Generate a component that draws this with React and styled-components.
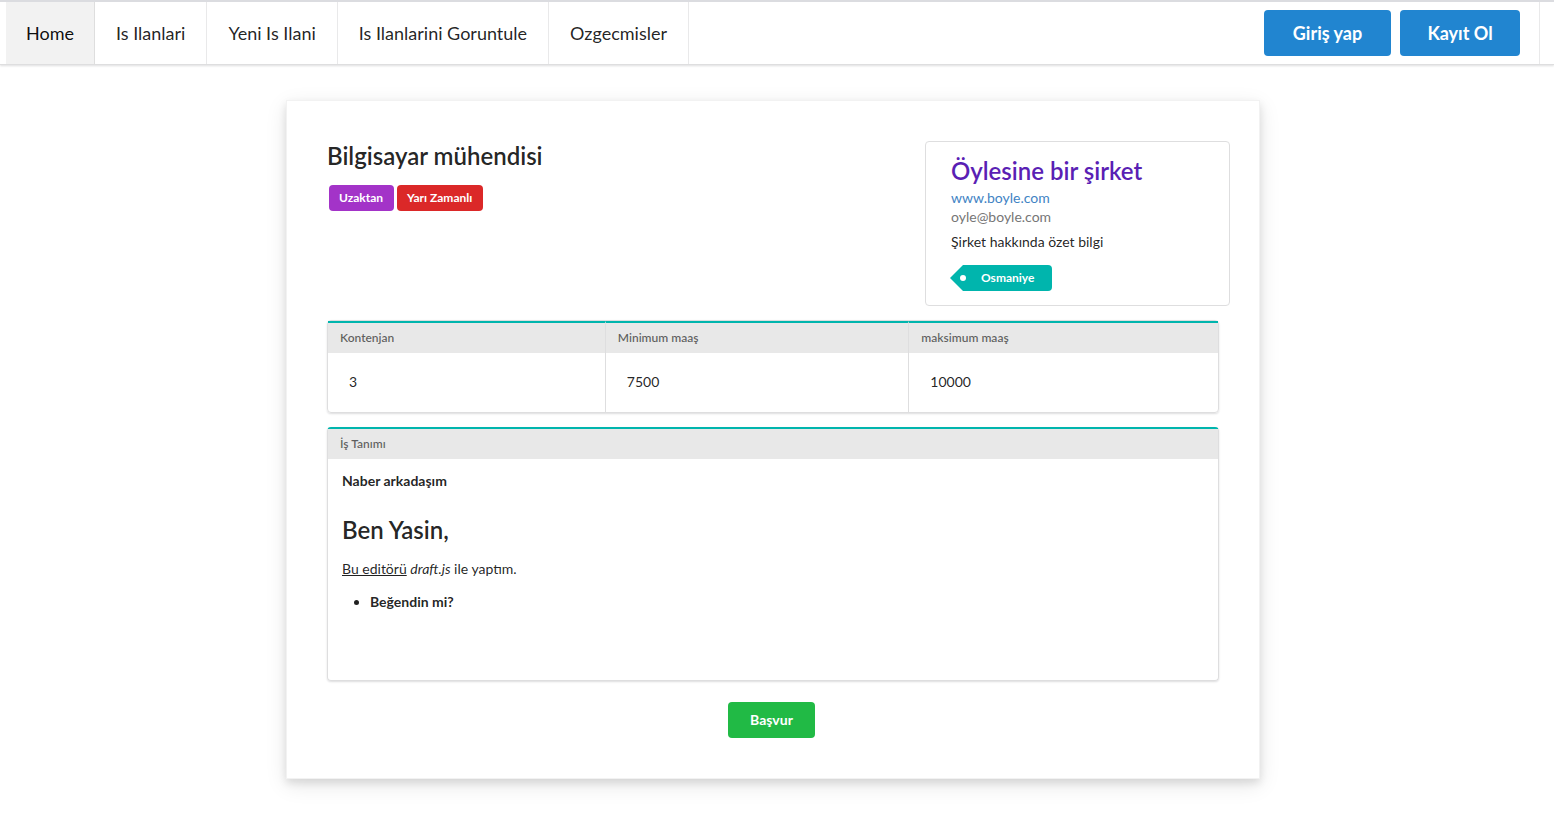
import React from "react";
import styled, { createGlobalStyle } from "styled-components";

const GlobalStyle = createGlobalStyle`
  *, *::before, *::after { box-sizing: border-box; }
  body {
    margin: 0;
    background: #fff;
    color: rgba(0, 0, 0, 0.87);
    font-family: Lato, "Liberation Sans", sans-serif;
    font-size: 14px;
    line-height: 20px;
  }
  h1, h2, h3, p, ul { margin: 0; padding: 0; font-weight: inherit; }
`;

const Menu = styled.nav`
  display: flex;
  height: 65px;
  padding: 0 14px 0 6px;
  border-top: 2px solid #dbdce0;
  border-bottom: 1px solid #dededf;
  box-shadow: 0 1px 2px rgba(34, 36, 38, 0.15);
`;

const MenuItem = styled.a`
  display: flex;
  align-items: center;
  padding: 0 ${(p) => (p.$active ? 20 : 21)}px;
  border-right: 1px solid ${(p) => (p.$active ? "#dedede" : "#e9e9ea")};
  background: ${(p) => (p.$active ? "#f2f2f2" : "transparent")};
  color: ${(p) => (p.$active ? "rgba(0,0,0,.95)" : "rgba(0,0,0,.87)")};
  font-size: 18px;
  white-space: nowrap;
  text-decoration: none;
`;

const MenuActions = styled.div`
  display: flex;
  align-items: center;
  gap: 9px;
  margin-left: auto;
  padding-right: 19px;
  border-right: 1px solid #e9e9ea;
`;

const Button = styled.button`
  min-width: ${(p) => p.$minWidth}px;
  height: ${(p) => (p.$large ? 46 : 36)}px;
  padding: 0 20px;
  border: 0;
  border-radius: 4px;
  background: ${(p) => p.$color};
  color: #fff;
  font-family: inherit;
  font-size: ${(p) => (p.$large ? 18 : 14)}px;
  font-weight: 700;
  line-height: 20px;
  white-space: nowrap;
  cursor: pointer;
`;

const Page = styled.main`
  padding: 35px 8px 43px 0;
`;

const Card = styled.article`
  max-width: 974px;
  margin: 0 auto;
  padding: 40px;
  border: 1px solid #f2f2f2;
  box-shadow: 0 4px 8px rgba(0, 0, 0, 0.1), 0 6px 20px rgba(0, 0, 0, 0.1);
`;

const CardHeader = styled.header`
  display: flex;
  justify-content: space-between;
  margin: 0 -11px 14px 0;
`;

const Title = styled.h1`
  font-size: 24px;
  font-weight: 600;
  line-height: 30px;
`;

const Badges = styled.div`
  display: flex;
  gap: 3px;
  margin: 14px 0 0 2px;
`;

const Badge = styled.span`
  height: 26px;
  padding: 0 11px 0 10px;
  border-radius: 4px;
  background: ${(p) => p.$color};
  color: #fff;
  font-size: 12px;
  font-weight: 700;
  line-height: 26px;
`;

const Company = styled.aside`
  width: 305px;
  height: 165px;
  padding: 14px 25px;
  border: 1px solid #dededf;
  border-radius: 4px;
`;

const CompanyName = styled.h2`
  margin-bottom: 2px;
  color: #5a1fb4;
  font-size: 24px;
  font-weight: 600;
  line-height: 30px;
`;

const CompanyLink = styled.a`
  display: block;
  color: ${(p) => (p.$muted ? "#767676" : "#4183c4")};
  line-height: 19px;
  text-decoration: none;
`;

const CompanyAbout = styled.p`
  margin: 6px 0 13px;
`;

const Tag = styled.span`
  position: relative;
  display: inline-block;
  height: 26px;
  margin-left: 12px;
  padding: 0 18px;
  border-radius: 0 4px 4px 0;
  background: #00b5ad;
  color: #fff;
  font-size: 12px;
  font-weight: 700;
  line-height: 26px;

  &::before {
    content: "";
    position: absolute;
    top: 0;
    left: -13px;
    width: 13px;
    height: 26px;
    background: #00b5ad;
    clip-path: polygon(100% 0, 100% 100%, 0 50%);
  }

  &::after {
    content: "";
    position: absolute;
    top: 10px;
    left: -3px;
    width: 6px;
    height: 6px;
    border-radius: 50%;
    background: #fff;
  }
`;

const Salary = styled.table`
  width: 100%;
  table-layout: fixed;
  border: 1px solid #dededf;
  border-radius: 4px;
  border-spacing: 0;
  box-shadow: 0 1px 2px rgba(34, 36, 38, 0.15);

  th, td { text-align: left; }
  th + th, td + td { border-left: 1px solid #dededf; }
`;

const HeadCell = styled.th`
  width: ${(p) => p.$width};
  height: 32px;
  padding: 0 12px;
  border-top: 2px solid #00b5ad;
  background: #e8e8e8;
  color: rgba(0, 0, 0, 0.6);
  font-size: 12px;
  font-weight: 600;
`;

const Cell = styled.td`
  height: 59px;
  padding: 0 21px 2px;
`;

const Description = styled.section`
  min-height: 254px;
  margin: 14px 0 21px;
  border: 1px solid #dededf;
  border-top: 2px solid #00b5ad;
  border-radius: 4px;
  box-shadow: 0 1px 2px rgba(34, 36, 38, 0.15);
`;

const DescriptionLabel = styled.h3`
  padding: 0 12px;
  background: #e8e8e8;
  color: rgba(0, 0, 0, 0.6);
  font-size: 12px;
  font-weight: 600;
  line-height: 30px;
`;

const DescriptionBody = styled.div`
  padding: 12px 14px;
`;

const Strong = styled.p`
  font-weight: 700;
`;

const Heading = styled.h2`
  margin: 24px 0 14px;
  font-size: 24px;
  font-weight: 600;
  line-height: 30px;
`;

const List = styled.ul`
  margin-top: 13px;
  padding-left: 28px;
  font-weight: 700;
`;

const Actions = styled.footer`
  display: flex;
  justify-content: center;
  padding-right: 3px;
`;

const LINKS = ["Home", "Is Ilanlari", "Yeni Is Ilani", "Is Ilanlarini Goruntule", "Ozgecmisler"];

export default function App() {
  return (
    <>
      <GlobalStyle />
      <Menu>
        {LINKS.map((label, i) => (
          <MenuItem key={label} href="#" $active={i === 0}>{label}</MenuItem>
        ))}
        <MenuActions>
          <Button type="button" $large $minWidth={127} $color="#2185d0">Giriş yap</Button>
          <Button type="button" $large $minWidth={120} $color="#2185d0">Kayıt Ol</Button>
        </MenuActions>
      </Menu>
      <Page>
        <Card>
          <CardHeader>
            <div>
              <Title>Bilgisayar mühendisi</Title>
              <Badges>
                <Badge $color="#a333c8">Uzaktan</Badge>
                <Badge $color="#db2828">Yarı Zamanlı</Badge>
              </Badges>
            </div>
            <Company>
              <CompanyName>Öylesine bir şirket</CompanyName>
              <CompanyLink href="#">www.boyle.com</CompanyLink>
              <CompanyLink href="#" $muted>oyle@boyle.com</CompanyLink>
              <CompanyAbout>Şirket hakkında özet bilgi</CompanyAbout>
              <Tag>Osmaniye</Tag>
            </Company>
          </CardHeader>
          <Salary>
            <thead>
              <tr>
                <HeadCell scope="col" $width="31.1%">Kontenjan</HeadCell>
                <HeadCell scope="col" $width="34.1%">Minimum maaş</HeadCell>
                <HeadCell scope="col">maksimum maaş</HeadCell>
              </tr>
            </thead>
            <tbody>
              <tr>
                <Cell>3</Cell>
                <Cell>7500</Cell>
                <Cell>10000</Cell>
              </tr>
            </tbody>
          </Salary>
          <Description>
            <DescriptionLabel>İş Tanımı</DescriptionLabel>
            <DescriptionBody>
              <Strong>Naber arkadaşım</Strong>
              <Heading>Ben Yasin,</Heading>
              <p><u>Bu editörü</u> <em>draft.js</em> ile yaptım.</p>
              <List><li>Beğendin mi?</li></List>
            </DescriptionBody>
          </Description>
          <Actions>
            <Button type="button" $minWidth={87} $color="#21ba45">Başvur</Button>
          </Actions>
        </Card>
      </Page>
    </>
  );
}
